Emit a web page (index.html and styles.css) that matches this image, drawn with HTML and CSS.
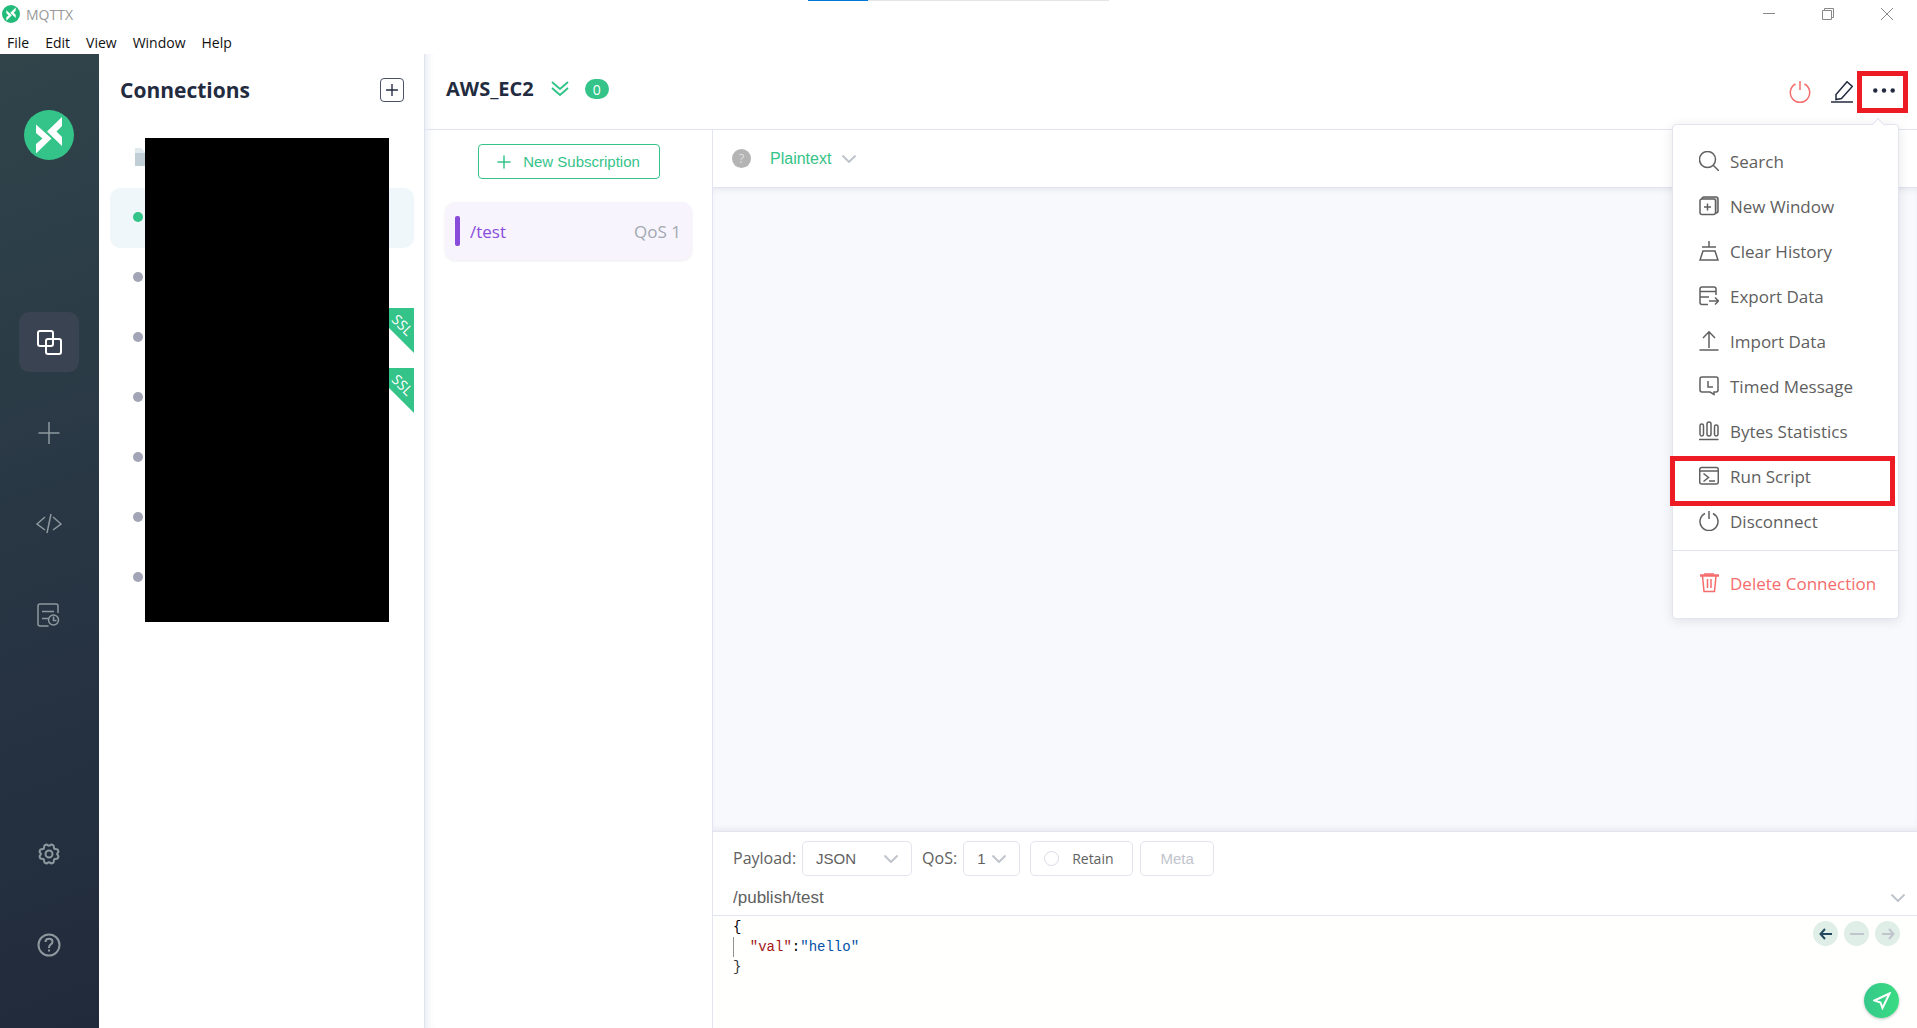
FILE: index.html
```html
<!DOCTYPE html>
<html lang="en">
<head>
    <meta charset="utf-8">
    <title>MQTTX</title>
    <link rel="stylesheet" href="styles.css">
</head>
<body>
    <div class="load-bar"><div class="load-bar-value"></div></div>

    <header class="titlebar">
        <svg class="title-logo" viewBox="0 0 50 50"><circle cx="25" cy="25" r="25" fill="#22bb7a"/><path fill="#fff" d="M12 14.500L27.500 28.500L12 43.500V34L18.500 28.500L12 23zM38 7V16L32.500 21.500L38 27V36L23 21.500z"/></svg>
        <span class="title-text">MQTTX</span>
        <div class="window-buttons">
            <button aria-label="Minimize"><svg viewBox="0 0 12 12"><path d="M0 5.500H12"/></svg></button>
            <button aria-label="Restore"><svg viewBox="0 0 12 12"><path d="M.5 2.500H9.500V11.500H.5zM2.500 2.500V.5H11.500V9.500H9.500"/></svg></button>
            <button aria-label="Close"><svg viewBox="0 0 12 12"><path d="M0 0L12 12M12 0L0 12"/></svg></button>
        </div>
    </header>
    <nav class="menubar">
        <button>File</button>
        <button>Edit</button>
        <button>View</button>
        <button>Window</button>
        <button>Help</button>
    </nav>

    <div class="app">
        <aside class="sidebar">
            <svg class="logo" viewBox="0 0 50 50"><circle cx="25" cy="25" r="25" fill="#34c388"/><path fill="#fff" d="M12 14.500L27.500 28.500L12 43.500V34L18.500 28.500L12 23zM38 7V16L32.500 21.500L38 27V36L23 21.500z"/></svg>
            <nav class="side-nav">
                <a href="#" class="side-link active" aria-label="Connections"><svg viewBox="0 0 26 26"><g stroke-width="2"><rect x="2" y="2" width="15" height="15" rx="2"/><rect x="10" y="10" width="15" height="15" rx="2"/></g></svg></a>
                <a href="#" class="side-link" aria-label="New connection"><svg viewBox="0 0 26 26"><path d="M13 2V24M2.500 13H23.500"/></svg></a>
                <a href="#" class="side-link" aria-label="Script"><svg viewBox="0 0 26 26"><path d="M9 6L1 13L9 19M17 6L25 13L17 19M15 3L11 22"/></svg></a>
                <a href="#" class="side-link" aria-label="Log"><svg viewBox="0 0 26 26"><path d="M12.500 24H4Q2 24 2 22V4Q2 2 4 2H20Q22 2 22 4V11M6 9.500H18M6 16.500H12"/><circle cx="17.500" cy="18" r="5"/><path d="M17.500 14.500V18.500H20.500"/></svg></a>
            </nav>
            <nav class="side-nav side-bottom">
                <a href="#" class="side-link" aria-label="Settings"><svg viewBox="0 0 26 26"><path stroke-width="2" stroke-linejoin="round" d="M10.600 3.500L13 4.800L15.400 3.500L17.500 4.400L18.200 7.800L21.600 8.500L22.500 10.600L21 13L22.500 15.400L21.600 17.500L18.200 18.200L17.500 21.600L15.400 22.500L13 21.200L10.600 22.500L8.500 21.600L7.800 18.200L4.400 17.500L3.500 15.400L5 13L3.500 10.600L4.400 8.500L7.800 7.800L8.500 4.400z"/><circle cx="13" cy="13" r="3.500" stroke-width="2"/></svg></a>
                <a href="#" class="side-link" aria-label="Help"><svg viewBox="0 0 26 26"><circle cx="13" cy="13" r="10.500" stroke-width="2"/><path stroke-width="2" d="M9.500 10Q9.500 6.700 13 6.700Q16.500 6.700 16.500 9.800Q16.500 11.500 14.500 12.700Q13 13.700 13 16M13 17.500V19.500"/></svg></a>
            </nav>
        </aside>

        <section class="connections">
            <div class="connections-head">
                <h2>Connections</h2>
                <button class="add-button" aria-label="Add"><svg viewBox="0 0 24 24"><path d="M12 5.500V18.500M5.500 12H18.500"/></svg></button>
            </div>
            <ul class="connection-list">
                <li><svg class="folder" viewBox="0 0 20 18"><path fill="#dfeaef" d="M0 0H6L10 4H20V18H0z"/><path fill="#c0ced6" d="M0 5H20V18H0z"/></svg></li>
                <li class="selected"><span class="dot"></span></li>
                <li><span class="dot"></span></li>
                <li><span class="dot"></span><span class="ssl"><span>SSL</span></span></li>
                <li><span class="dot"></span><span class="ssl"><span>SSL</span></span></li>
                <li><span class="dot"></span></li>
                <li><span class="dot"></span></li>
                <li><span class="dot"></span></li>
            </ul>
            <div class="names-cover"></div>
        </section>

        <main class="main">
            <div class="topbar">
                <h2>AWS_EC2</h2>
                <button class="plain-button collapse" aria-label="Collapse"><svg viewBox="0 0 18 16"><path d="M1 1L9 8L17 1M1 7L9 14L17 7"/></svg></button>
                <span class="badge">0</span>
                <div class="actions">
                    <button class="plain-button power" aria-label="Disconnect"><svg viewBox="0 0 22 22"><path d="M11 0V9M6.500 3A9.700 9.700 0 1 0 15.500 3"/></svg></button>
                    <button class="plain-button" aria-label="Edit"><svg viewBox="0 0 22 22"><path d="M0 21H22M5 18.500V13.500L16 .8L21.300 5.500L10.500 17.500z"/></svg></button>
                    <div class="more">
                        <button class="plain-button" aria-label="More"><svg viewBox="0 0 22 22"><g fill="currentColor" stroke="none"><circle cx="2.300" cy="9.500" r="2.200"/><circle cx="11" cy="9.500" r="2.200"/><circle cx="19.700" cy="9.500" r="2.200"/></g></svg></button>
                        <ul class="menu">
                            <li><button><svg viewBox="0 0 20 20"><circle cx="8.500" cy="8.500" r="8"/><path d="M14 14L20 20"/></svg>Search</button></li>
                            <li><button><svg viewBox="0 0 20 20"><path fill="#c8c8c8" d="M3 3Q3 1 5 1H17Q19 1 19 3V15Q19 17 17 17z"/><rect x="1" y="3" width="15.500" height="15.500" rx="2" fill="#fff"/><path d="M8.500 7.500V14.500M5 11H12"/></svg>New Window</button></li>
                            <li><button><svg viewBox="0 0 20 20"><path d="M10 0V6M3 6H17M4 10H16L19 19H1z"/></svg>Clear History</button></li>
                            <li><button><svg viewBox="0 0 20 20"><path d="M9 18.500H3Q1 18.500 1 16.500V3Q1 1 3 1H15Q17 1 17 3V9M1 5.500H17M1 11H10M10 15H19.500M16 11.500L19.500 15L16 18.500"/></svg>Export Data</button></li>
                            <li><button><svg viewBox="0 0 20 20"><path d="M10 17V1M4 7L10 .8L16 7M.5 19H19.500"/></svg>Import Data</button></li>
                            <li><button><svg viewBox="0 0 20 20"><path d="M3 1H17Q19 1 19 3V14Q19 16 17 16H15V18.500L11 16H3Q1 16 1 14V3Q1 1 3 1zM9 5V11H14"/></svg>Timed Message</button></li>
                            <li><button><svg viewBox="0 0 20 20"><rect x="1" y="3" width="3.500" height="12" rx="1.700"/><rect x="8" y="1" width="4" height="14" rx="2"/><rect x="15.500" y="4" width="3.500" height="11" rx="1.700"/><path d="M0 18.500H19.500"/></svg>Bytes Statistics</button></li>
                            <li class="marked"><button><svg viewBox="0 0 20 20"><rect x="0.700" y="1.500" width="18.600" height="16.500" rx="2"/><path d="M1 5H19M4.500 7.500L9.500 11.500L4.500 15.500M10 15H16"/></svg>Run Script</button></li>
                            <li><button><svg viewBox="0 0 20 20"><path d="M10 0V8M6 2.500A9 9 0 1 0 14 2.500"/></svg>Disconnect</button></li>
                            <li class="danger"><button><svg viewBox="0 0 20 20"><path d="M1 2.500H20" stroke-width="2.500"/><path d="M5 1H15M3.500 3L5 18.500H15.500L17 3M8.500 6V15M12 6V15"/></svg>Delete Connection</button></li>
                        </ul>
                    </div>
                </div>
            </div>

            <div class="workspace">
                <section class="subscriptions">
                    <button class="new-subscription"><svg viewBox="0 0 14 14"><path d="M7 .5V13.500M.5 7H13.500"/></svg>New Subscription</button>
                    <div class="topic">
                        <span class="topic-color"></span>
                        <span class="topic-name">/test</span>
                        <span class="topic-qos">QoS 1</span>
                    </div>
                </section>

                <section class="messages">
                    <div class="filterbar">
                        <span class="help">?</span>
                        <span class="select-box format">
                            <select aria-label="Message format"><option>Plaintext</option></select>
                            <svg class="arrow" viewBox="0 0 14 8"><path d="M.5 .5L7 7L13.500 .5"/></svg>
                        </span>
                    </div>
                    <div class="message-list"></div>
                    <div class="publish">
                        <div class="publish-options">
                            <label for="payload">Payload:</label>
                            <span class="select-box payload">
                                <select id="payload"><option>JSON</option></select>
                                <svg class="arrow" viewBox="0 0 14 8"><path d="M.5 .5L7 7L13.500 .5"/></svg>
                            </span>
                            <label for="qos">QoS:</label>
                            <span class="select-box qos">
                                <select id="qos"><option>1</option></select>
                                <svg class="arrow" viewBox="0 0 14 8"><path d="M.5 .5L7 7L13.500 .5"/></svg>
                            </span>
                            <label class="retain"><input type="radio" name="retain">Retain</label>
                            <button class="meta">Meta</button>
                        </div>
                        <div class="topic-row">
                            <input type="text" value="/publish/test" aria-label="Topic">
                            <svg class="arrow" viewBox="0 0 14 8"><path d="M.5 .5L7 7L13.500 .5"/></svg>
                        </div>
                        <div class="editor">
<pre><code>{
<span class="indent">  </span><span class="key">"val"</span>:<span class="string">"hello"</span>
<span class="brace">}</span></code></pre>
                            <div class="editor-side">
                                <div class="history">
                                    <button class="back" aria-label="Previous"><svg viewBox="0 0 14 12"><path d="M13 6H2M6 1L1.500 6L6 11"/></svg></button>
                                    <button aria-label="Clear"><svg viewBox="0 0 14 12"><path d="M0 6H14"/></svg></button>
                                    <button aria-label="Next"><svg viewBox="0 0 14 12"><path d="M1 6H12M8 1L12.500 6L8 11"/></svg></button>
                                </div>
                                <button class="send" aria-label="Send"><svg viewBox="0 0 18 18"><path d="M16.500 1.500L1.500 8.500L7.500 10.500L9.500 16z"/></svg></button>
                            </div>
                        </div>
                    </div>
                </section>
            </div>
        </main>
    </div>
</body>
</html>
```
FILE: styles.css
```css
* {
    box-sizing: border-box;
}

body {
    display: flex;
    flex-direction: column;
    height: 100vh;
    margin: 0;
    overflow: hidden;
    background-color: #fff;
    font-family: "Open Sans", "Noto Sans", sans-serif;
    font-size: 16px;
    color: #606060;
}

button,
input,
select {
    padding: 0;
    border: none;
    outline: none;
    background: none;
    font: inherit;
    color: inherit;
}

ul,
h2,
pre {
    margin: 0;
    padding: 0;
    list-style: none;
}

svg {
    display: block;
    flex-shrink: 0;
    fill: none;
    stroke: currentColor;
    stroke-width: 1.5;
}

/* Window frame */
.load-bar {
    position: absolute;
    top: 0;
    left: 42%;
    width: 301px;
    height: 1px;
    margin-left: 3px;
    background-color: #e5e5e5;
}

.load-bar-value {
    width: 20%;
    height: 1px;
    background-color: #0078d7;
}

.titlebar {
    display: flex;
    align-items: center;
    height: 28px;
    padding: 0 24px 0 2px;
    font-size: 14px;
    color: #999;
}

.title-logo,
.logo {
    stroke: none;
}

.title-logo {
    width: 18px;
    height: 18px;
    margin-right: 6px;
}

.window-buttons {
    display: flex;
    gap: 47px;
    margin-left: auto;
}

.window-buttons svg {
    width: 12px;
    height: 12px;
    stroke: #888;
    stroke-width: 1;
}

.menubar {
    display: flex;
    gap: 16px;
    height: 26px;
    padding: 2px 7px 0;
    font-size: 14px;
    color: #111;
}

.app {
    display: flex;
    flex: 1;
    min-height: 0;
}

/* Left sidebar */
.sidebar {
    display: flex;
    flex-direction: column;
    align-items: center;
    width: 99px;
    padding: 56px 2px 53px 0;
    background: linear-gradient(160deg, #30444a 0%, #283644 50%, #212a3b 100%);
}

.logo {
    width: 50px;
    height: 50px;
    margin-bottom: 152px;
}

.side-nav {
    display: flex;
    flex-direction: column;
    gap: 31px;
}

.side-bottom {
    margin-top: auto;
}

.side-link {
    display: flex;
    justify-content: center;
    align-items: center;
    width: 60px;
    height: 60px;
    border-radius: 10px;
    color: #8d999f;
}

.side-link.active {
    background-color: #394351;
    color: #fff;
}

.side-link svg {
    width: 26px;
    height: 26px;
}

/* Connections */
.connections {
    position: relative;
    width: 326px;
    border-right: 1px solid #dfe3ee;
}

.connections-head {
    display: flex;
    justify-content: space-between;
    align-items: center;
    height: 74px;
    padding: 0 20px 2px 21px;
}

h2 {
    font-size: 21px;
    font-weight: 700;
    color: #232b3f;
}

.add-button {
    width: 24px;
    height: 24px;
    border: 1px solid #4a5368;
    border-radius: 4px;
    color: #232b3f;
}

.add-button svg {
    width: 22px;
    height: 22px;
}

.connection-list {
    padding: 0 10px 0 11px;
}

.connection-list li {
    display: flex;
    align-items: center;
    height: 60px;
    padding: 0 0 2px 23px;
    border-radius: 10px;
}

.connection-list .selected {
    background-color: #eff7fa;
}

.folder {
    width: 20px;
    height: 18px;
    margin-left: 2px;
    stroke: none;
}

.dot {
    width: 10px;
    height: 10px;
    border-radius: 50%;
    background-color: #a1a5b5;
}

.selected .dot {
    background-color: #34c388;
}

.ssl {
    display: flex;
    justify-content: flex-end;
    align-self: flex-start;
    width: 45px;
    height: 45px;
    margin-left: auto;
    background-color: #34c388;
    clip-path: polygon(0 0, 100% 0, 100% 100%);
}

.ssl span {
    height: 34px;
    line-height: 34px;
    font-size: 14px;
    color: #fff;
    transform: rotate(45deg);
}

.names-cover {
    position: absolute;
    top: 84px;
    right: 35px;
    width: 244px;
    height: 484px;
    background-color: #000;
}

/* Main area */
.main {
    display: flex;
    flex: 1;
    flex-direction: column;
    min-width: 0;
    box-shadow: inset 10px 0 10px -8px #e6e9f2;
}

.topbar {
    display: flex;
    align-items: center;
    height: 76px;
    padding: 0 22px 6px 21px;
    border-bottom: 1px solid #e2e4ef;
}

.topbar h2 {
    font-size: 20px;
}

.plain-button {
    display: block;
}

.plain-button svg {
    width: 22px;
    height: 22px;
}

.collapse {
    margin: 0 16px 0 17px;
    color: #34c388;
}

.collapse svg {
    width: 18px;
    height: 16px;
    stroke-width: 2;
}

.badge {
    width: 24px;
    height: 20px;
    border-radius: 10px;
    background-color: #34c388;
    font-size: 14px;
    line-height: 21px;
    text-align: center;
    color: #fff;
}

.actions {
    display: flex;
    align-items: center;
    gap: 20px;
    margin-left: auto;
    padding-top: 6px;
    color: #232b3f;
}

.power {
    color: #f56c6c;
}

.more {
    position: relative;
}

/* red frame round the control */
.more::before,
.marked::after {
    content: "";
    position: absolute;
    border: 5px solid #ed1c24;
    pointer-events: none;
}

.more::before {
    inset: -10px -13px -10px -16px;
}

.menu {
    position: absolute;
    z-index: 2;
    top: 43px;
    right: -4px;
    width: 227px;
    padding: 14px 0 12px;
    border: 1px solid #e2e4ef;
    border-radius: 4px;
    background-color: #fff;
    box-shadow: 0 2px 12px rgba(0, 0, 0, 0.1);
    font-size: 17px;
    color: #606060;
}

.menu::before {
    content: "";
    position: absolute;
    top: -5px;
    right: 15px;
    width: 9px;
    height: 9px;
    border: 1px solid #e2e4ef;
    border-width: 1px 0 0 1px;
    background-color: #fff;
    transform: rotate(45deg);
}

.menu li {
    position: relative;
}

.menu button {
    display: flex;
    align-items: center;
    gap: 11px;
    width: 100%;
    height: 45px;
    padding-left: 26px;
    white-space: nowrap;
}

.menu svg {
    width: 20px;
    height: 20px;
}

.menu .danger {
    margin-top: 6px;
    padding-top: 10px;
    border-top: 1px solid #e2e4ef;
    color: #f56c6c;
}

.marked::after {
    top: 2px;
    right: 3px;
    bottom: -7px;
    left: -3px;
    z-index: 1;
}

.workspace {
    display: flex;
    flex: 1;
    min-height: 0;
}

/* Subscriptions */
.subscriptions {
    display: flex;
    flex-direction: column;
    gap: 23px;
    width: 288px;
    padding: 14px 20px 0;
    border-right: 1px solid #e2e4ef;
}

.new-subscription {
    display: flex;
    align-self: center;
    justify-content: center;
    align-items: center;
    gap: 12px;
    width: 182px;
    height: 35px;
    border: 1px solid #34c388;
    border-radius: 4px;
    font-family: "Liberation Sans", Arial, sans-serif;
    font-size: 15px;
    color: #34c388;
}

.new-subscription svg {
    width: 14px;
    height: 14px;
}

.topic {
    display: flex;
    align-items: center;
    height: 58px;
    padding: 0 11px 0 10px;
    border-radius: 10px;
    background-color: #f7f4fe;
    box-shadow: 0 1px 3px rgba(0, 0, 0, 0.08);
}

.topic-color {
    width: 5px;
    height: 30px;
    margin-right: 10px;
    border-radius: 2px;
    background-color: #8a4bdb;
}

.topic-name,
.topic-qos {
    font-size: 17px;
}

.topic-name {
    color: #8a4bdb;
}

.topic-qos {
    margin-left: auto;
    color: #a2a9b0;
}

/* Messages */
.messages {
    display: flex;
    flex: 1;
    flex-direction: column;
    min-width: 0;
}

.filterbar {
    display: flex;
    align-items: center;
    gap: 19px;
    height: 58px;
    padding-left: 19px;
    border-bottom: 1px solid #e2e4ef;
}

.help {
    width: 19px;
    height: 19px;
    border-radius: 50%;
    background-color: #b4b4b4;
    font-size: 13px;
    line-height: 19px;
    text-align: center;
    color: #ddd;
}

.select-box {
    position: relative;
    font-family: "Liberation Sans", Arial, sans-serif;
    font-size: 15px;
}

.select-box select {
    width: 100%;
    height: 35px;
    padding-left: 13px;
    border: 1px solid #e2e4ef;
    border-radius: 5px;
    appearance: none;
}

.select-box .arrow {
    position: absolute;
    top: 14px;
    right: 14px;
    pointer-events: none;
}

.arrow {
    width: 14px;
    height: 8px;
    stroke: #c0c4cc;
    stroke-width: 2;
}

.format {
    width: 86px;
    font-size: 16px;
    color: #34c388;
}

.format select {
    padding-left: 0;
    border: none;
}

.format .arrow {
    right: 0;
}

.message-list {
    flex: 1;
    background-color: #f8f9fd;
    box-shadow: inset 0 6px 6px -4px #e6e8ee, inset 0 -6px 6px -4px #e6e8ee;
}

/* Publish form */
.publish {
    border-top: 1px solid #e2e4ef;
}

.publish-options {
    display: flex;
    align-items: center;
    height: 52px;
    padding-left: 20px;
}

.payload {
    width: 110px;
    margin: 0 10px 0 6px;
}

.qos {
    width: 57px;
    margin: 0 10px 0 6px;
}

.retain,
.meta {
    height: 35px;
    border: 1px solid #e2e4ef;
    border-radius: 5px;
}

.retain {
    display: flex;
    align-items: center;
    gap: 13px;
    width: 103px;
    margin-right: 7px;
    padding-left: 13px;
    font-size: 14px;
}

.retain input {
    width: 15px;
    height: 15px;
    margin: 0;
    border: 1px solid #d9dce5;
    border-radius: 50%;
    appearance: none;
}

.meta {
    width: 74px;
    font-family: "Liberation Sans", Arial, sans-serif;
    font-size: 15px;
    color: #c0c4cc;
}

.topic-row {
    display: flex;
    align-items: center;
    height: 32px;
    padding: 0 12px 4px 20px;
    border-bottom: 1px solid #e2e4ef;
}

.topic-row input {
    flex: 1;
    font-family: "Liberation Sans", Arial, sans-serif;
    font-size: 17px;
}

.editor {
    display: flex;
    justify-content: space-between;
    padding: 1px 17px 10px 20px;
    background-color: #fffffe;
}

pre,
code {
    font-family: "Liberation Mono", monospace;
    font-size: 14px;
    line-height: 20px;
    color: #000;
}

.indent {
    display: inline-block;
    height: 20px;
    vertical-align: top;
    box-shadow: inset 1px 0 #939393;
}

.key {
    color: #a31515;
}

.string {
    color: #0451a5;
}

.brace {
    color: #333;
}

.editor-side {
    display: flex;
    flex-direction: column;
    align-items: flex-end;
    gap: 37px;
    padding-top: 4px;
}

.history {
    display: flex;
    gap: 6px;
}

.history button,
.send {
    display: flex;
    justify-content: center;
    align-items: center;
    border-radius: 50%;
}

.history button {
    width: 25px;
    height: 25px;
    background-color: #dfeee7;
    color: #c0c4cc;
}

.history svg {
    width: 14px;
    height: 12px;
    stroke-width: 2;
}

.history .back {
    color: #24495f;
}

.send {
    width: 35px;
    height: 35px;
    margin-right: 1px;
    background: linear-gradient(90deg, #35c88b, #39dc82);
    box-shadow: 0 1px 3px rgba(0, 0, 0, 0.25);
    color: #fff;
}

.send svg {
    width: 18px;
    height: 18px;
    stroke-width: 2;
}
```
